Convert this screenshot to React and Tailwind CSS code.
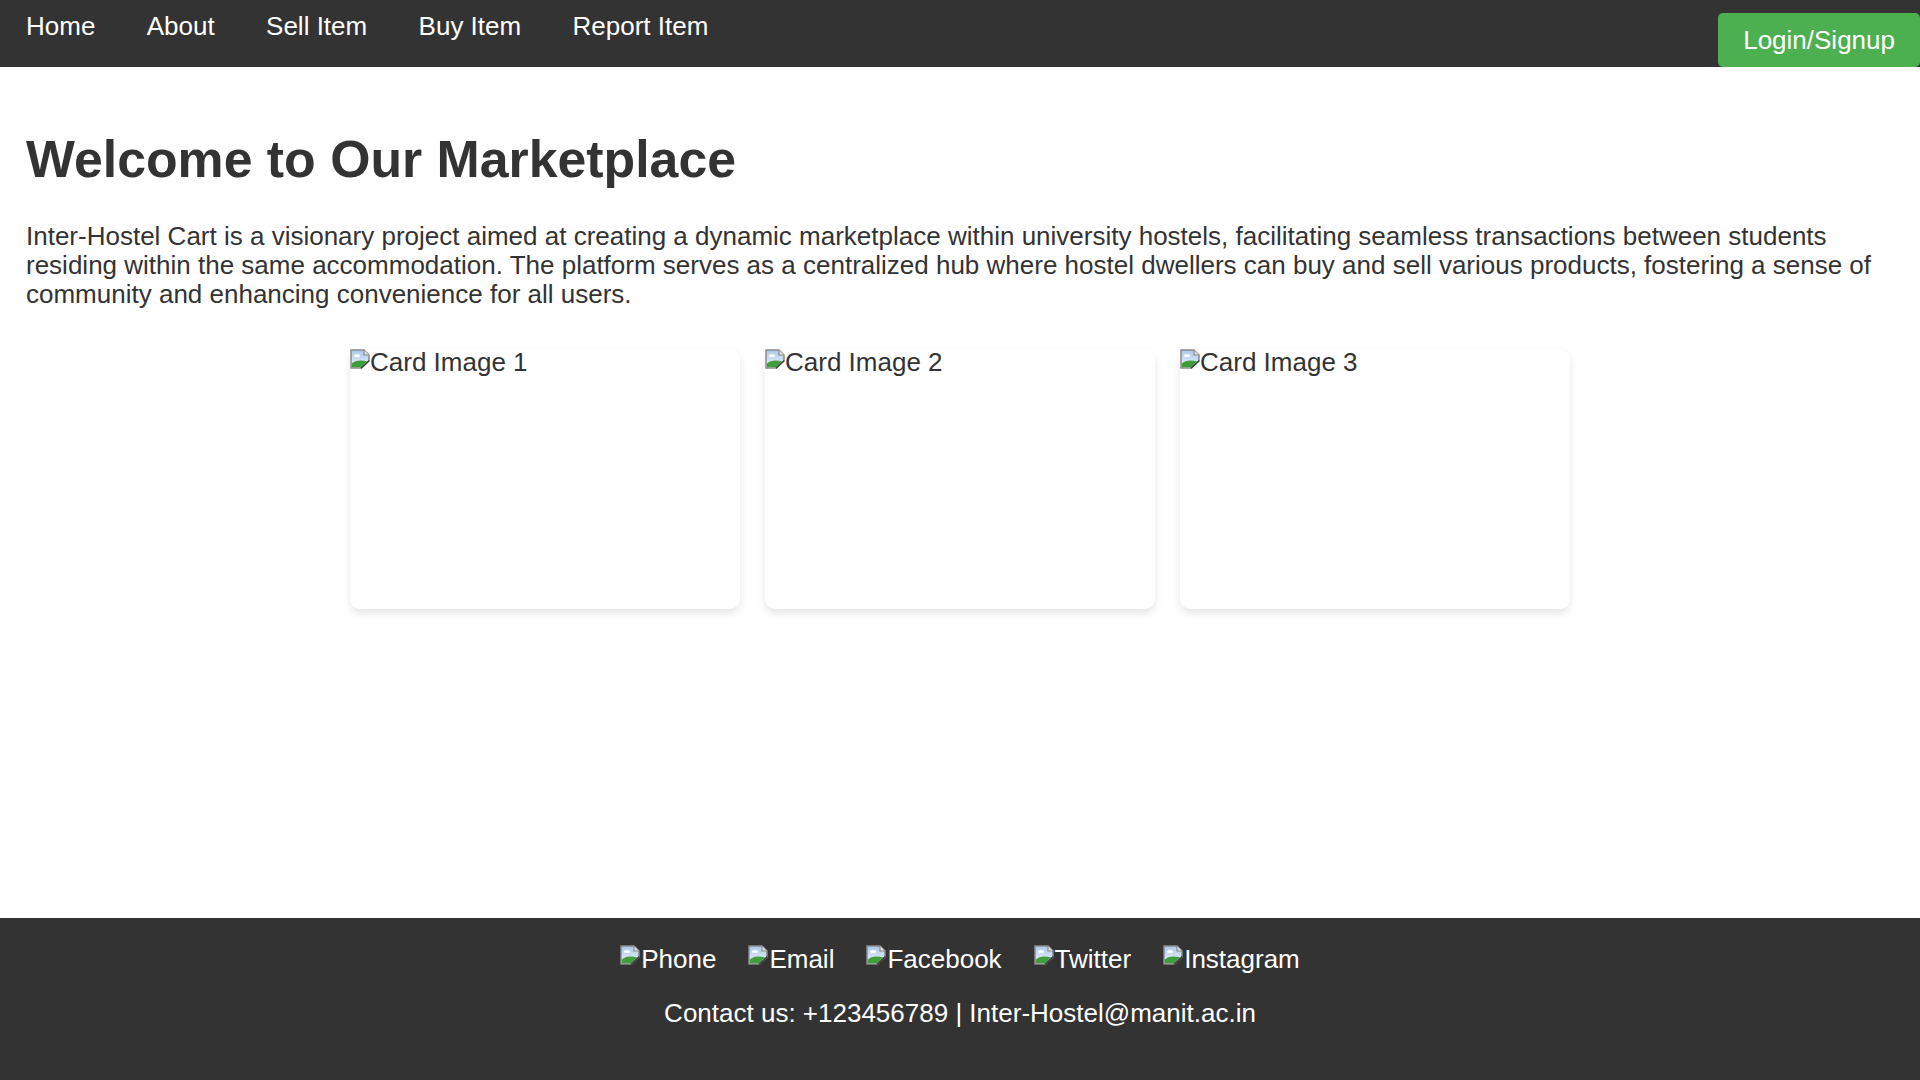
const links = ['Home', 'About', 'Sell Item', 'Buy Item', 'Report Item'];
const socials = ['Phone', 'Email', 'Facebook', 'Twitter', 'Instagram'];

function BrokenImage() {
  return (
    <svg viewBox="0 0 20 20" width="20" height="20" className="inline align-baseline shrink-0">
      <defs>
        <linearGradient id="sky" x1="0" y1="0" x2="0" y2="1">
          <stop offset="0" stopColor="#a9c7ea" />
          <stop offset="1" stopColor="#eef4fb" />
        </linearGradient>
      </defs>
      <path d="M1 1H14L19 6V12L11.5 19H1Z" fill="url(#sky)" stroke="#8a8a8a" strokeWidth="1.5" />
      <path d="M14 1V6H19" fill="#e2e2e2" stroke="#8a8a8a" strokeWidth="1.2" />
      <ellipse cx="7" cy="6.5" rx="3" ry="1.6" fill="#ffffff" />
      <path d="M1.8 18.3V14.5C5 11.5 10 10.5 17 12.3L11.2 18.3Z" fill="#3f9d3a" />
      <path d="M11 19.3L19.3 11.5" stroke="#3a3a3a" strokeWidth="1.2" />
    </svg>
  );
}

export default function App() {
  return (
    <div className="min-h-screen flex flex-col bg-white text-[#333] font-['Liberation_Sans',Arial,sans-serif]">
      {/* Navbar */}
      <nav className="h-[67px] bg-[#333] flex items-start justify-between">
        <ul className="flex pl-[0.3px]">
          {links.map((l) => (
            <li key={l}>
              <a href="#" className="block px-[25.7px] pt-[11px] text-[26px] leading-[30px] text-white">
                {l}
              </a>
            </li>
          ))}
        </ul>
        <button className="mt-[13px] h-[54px] px-[25px] rounded-[5px] bg-[#4CAF50] text-white text-[26px] leading-none">
          Login/Signup
        </button>
      </nav>

      {/* Intro */}
      <main className="px-[26px]">
        <h1 className="mt-[62px] text-[51.8px] leading-[60px] font-bold">Welcome to Our Marketplace</h1>
        <p className="mt-[33px] text-[26px] leading-[28.8px]">
          Inter-Hostel Cart is a visionary project aimed at creating a dynamic marketplace within university hostels, facilitating seamless transactions between students residing within the same accommodation. The platform serves as a centralized hub where hostel dwellers can buy and sell various products, fostering a sense of community and enhancing convenience for all users.
        </p>

        <div className="mt-[41px] flex justify-center gap-[25px]">
          {[1, 2, 3].map((n) => (
            <div key={n} className="w-[390px] h-[260px] rounded-[10px] bg-white shadow-[0_4px_8px_rgba(0,0,0,0.1)]">
              <div className="flex items-start text-[26px] leading-[26px] text-[#333]">
                <BrokenImage />
                <span>Card Image {n}</span>
              </div>
            </div>
          ))}
        </div>
      </main>

      {/* Footer */}
      <footer className="mt-auto h-[162px] bg-[#333] text-white flex flex-col items-center">
        <div className="mt-[22.5px] flex gap-[32px] text-[26px] leading-[30px]">
          {socials.map((s) => (
            <span key={s} className="flex items-end">
              <span className="pb-[3px] pr-px"><BrokenImage /></span>
              <span>{s}</span>
            </span>
          ))}
        </div>
        <p className="mt-[24px] text-[26px] leading-[30px]">Contact us: +123456789 | Inter-Hostel@manit.ac.in</p>
      </footer>
    </div>
  );
}
